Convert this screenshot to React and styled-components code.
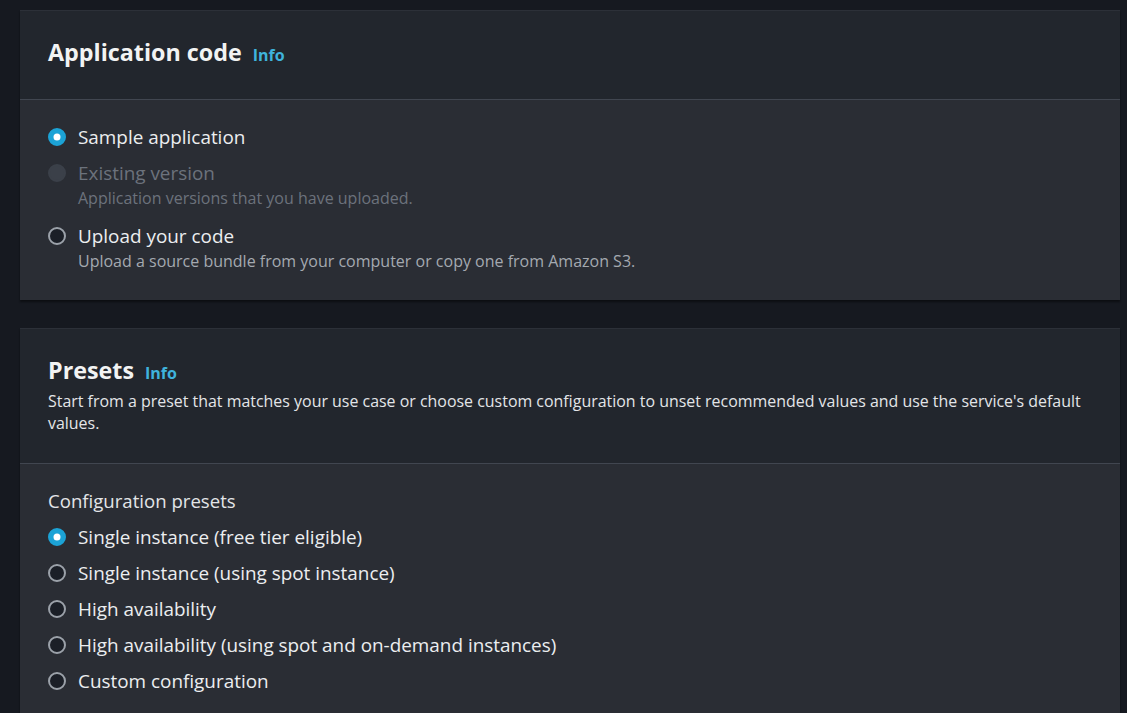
import styled, { createGlobalStyle } from "styled-components"

const GlobalStyle = createGlobalStyle`
  html, body {
    margin: 0;
    padding: 0;
    background: #161920;
  }
  body {
    font-family: "Open Sans", "Noto Sans", Arial, sans-serif;
    -webkit-font-smoothing: antialiased;
  }
`

const codeOptions = [
  { label: "Sample application", checked: true },
  { label: "Existing version", desc: "Application versions that you have uploaded.", disabled: true },
  { label: "Upload your code", desc: "Upload a source bundle from your computer or copy one from Amazon S3." },
]

const presetOptions = [
  { label: "Single instance (free tier eligible)", checked: true },
  { label: "Single instance (using spot instance)" },
  { label: "High availability" },
  { label: "High availability (using spot and on-demand instances)" },
  { label: "Custom configuration" },
]

const Option = ({ label, desc, checked, disabled }) => (
  <OptionRow>
    <Radio $checked={checked} $disabled={disabled} />
    <OptionText>
      <OptionLabel $disabled={disabled}>{label}</OptionLabel>
      {desc && <OptionDesc $disabled={disabled}>{desc}</OptionDesc>}
    </OptionText>
  </OptionRow>
)

const App = () => {
  return (
    <Page>
      <GlobalStyle />
      <Card>
        <CardHeader>
          <Title>
            Application code <InfoLink>Info</InfoLink>
          </Title>
        </CardHeader>
        <CardBody>
          <OptionList>
            {codeOptions.map((o) => (
              <Option key={o.label} {...o} />
            ))}
          </OptionList>
        </CardBody>
      </Card>

      <Card>
        <CardHeader>
          <Title>
            Presets <InfoLink>Info</InfoLink>
          </Title>
          <HeaderDesc>
            Start from a preset that matches your use case or choose custom configuration to unset recommended values and use the service's default values.
          </HeaderDesc>
        </CardHeader>
        <CardBody $top={25}>
          <FieldLabel>Configuration presets</FieldLabel>
          <OptionList>
            {presetOptions.map((o) => (
              <Option key={o.label} {...o} />
            ))}
          </OptionList>
        </CardBody>
      </Card>
    </Page>
  )
}

const Page = styled.div`
  display: flex;
  flex-direction: column;
  gap: 28px;
  padding: 10px 7px 0 20px;
  min-height: 713px;
  box-sizing: border-box;
`

const Card = styled.section`
  background: #2a2d34;
  box-shadow: 0 2px 2px rgba(0, 0, 0, 0.45);
`

const CardHeader = styled.div`
  background: #22262d;
  border-top: 1px solid #2c3038;
  padding: 26px 28px 29px;
  border-bottom: 1px solid #414650;
`

const Title = styled.h2`
  margin: 0;
  padding-bottom: 3px;
  display: flex;
  align-items: baseline;
  gap: 11px;
  height: 30px;
  font-size: 23.3px;
  line-height: 30px;
  font-weight: 700;
  color: #f2f3f3;
`

const InfoLink = styled.span`
  font-size: 16px;
  line-height: 1;
  font-weight: 700;
  color: #3fb3dc;
`

const HeaderDesc = styled.p`
  margin: 2px 0 0;
  font-size: 15.95px;
  line-height: 22px;
  color: #e3e5e8;
  max-width: 1040px;
`

const CardBody = styled.div`
  padding: ${(p) => p.$top || 24}px 28px 24px;
`

const FieldLabel = styled.div`
  font-size: 18.6px;
  line-height: 24px;
  color: #e3e5e8;
  margin-bottom: 11px;
`

const OptionList = styled.div`
  display: flex;
  flex-direction: column;
  gap: 10px;
`

const OptionRow = styled.div`
  display: flex;
  align-items: flex-start;
  gap: 12px;
`

const Radio = styled.span`
  flex: none;
  box-sizing: border-box;
  width: 18px;
  height: 18px;
  margin-top: 4px;
  border-radius: 50%;
  position: relative;
  background: ${(p) => (p.$checked ? "#1ca3d6" : p.$disabled ? "#3b4049" : "#1b1f27")};
  border: 2px solid ${(p) => (p.$checked ? "#1ca3d6" : p.$disabled ? "#3b4049" : "#9ba1a9")};

  &::after {
    content: "";
    display: ${(p) => (p.$checked ? "block" : "none")};
    position: absolute;
    left: 50%;
    top: 50%;
    width: 7px;
    height: 7px;
    border-radius: 50%;
    background: #ffffff;
    transform: translate(-50%, -50%);
  }
`

const OptionText = styled.div`
  display: flex;
  flex-direction: column;
`

const OptionLabel = styled.span`
  font-size: 18.9px;
  line-height: 26px;
  color: ${(p) => (p.$disabled ? "#6c727c" : "#eceef0")};
`

const OptionDesc = styled.span`
  font-size: 16px;
  line-height: 24px;
  padding-bottom: 3px;
  color: ${(p) => (p.$disabled ? "#6c727c" : "#a4a9b0")};
`

export default App
